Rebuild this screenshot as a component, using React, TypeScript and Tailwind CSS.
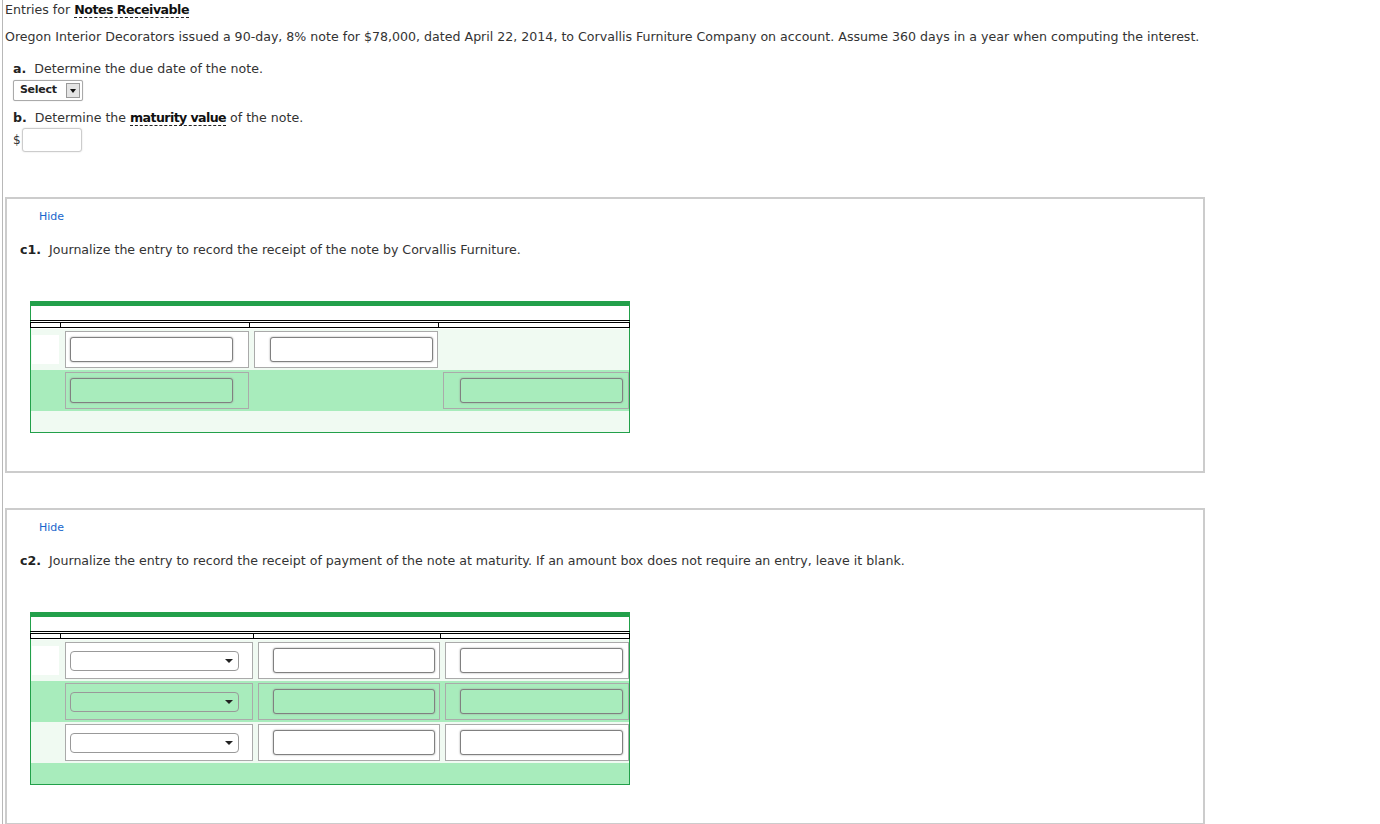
import React from "react";

const font = { fontFamily: '"DejaVu Sans", Verdana, sans-serif' };

function TextBox({ green }: { green?: boolean }) {
  return (
    <div
      className={`h-[25px] w-full rounded-[3px] border border-[#808080] shadow-[0_0_2px_#9a9a9a] ${
        green ? "bg-[#a8ecbc]" : "bg-white"
      }`}
    />
  );
}

function SelectBox({ green }: { green?: boolean }) {
  return (
    <div
      className={`flex h-[20px] w-full items-center justify-end rounded-[4px] border border-[#999] pr-[5px] ${
        green ? "bg-[#a8ecbc]" : "bg-white"
      }`}
    >
      <span className="h-0 w-0 border-x-[4px] border-t-[4px] border-x-transparent border-t-[#222]" />
    </div>
  );
}

type CellDef = { kind: "text" | "select"; pl: number; pr: number } | null;
type RowDef = { green: boolean; cells: CellDef[] };

function Cell({ width, green, def }: { width: number; green: boolean; def: NonNullable<CellDef> }) {
  return (
    <div className="flex h-full shrink-0 items-center justify-center" style={{ width }}>
      <div
        className={`flex h-[37px] items-center border border-[#aaa] ${green ? "bg-[#a8ecbc]" : "bg-white"}`}
        style={{ width: width - 5, paddingLeft: def.pl, paddingRight: def.pr }}
      >
        {def.kind === "select" ? <SelectBox green={green} /> : <TextBox green={green} />}
      </div>
    </div>
  );
}

function Journal({ cols, rows, tailGreen }: { cols: number[]; rows: RowDef[]; tailGreen: boolean }) {
  return (
    <div className="w-[600px] border-x border-b border-[#22a04a]">
      <div className="-mx-px h-[5px] bg-[#22a04a]" />
      <div className="h-[14px] bg-white" />
      <div className="-mx-px border-t border-black pt-px">
        <div className="flex h-[6px]">
          {cols.map((w, i) => (
            <div
              key={i}
              className={`h-full border-y border-r border-black ${i === 0 ? "border-l" : ""}`}
              style={{ width: i === 0 ? w + 1 : w }}
            />
          ))}
        </div>
      </div>
      <div className="h-px" />
      {rows.map((r, ri) => (
        <div key={ri} className={`flex h-[41px] items-center ${r.green ? "bg-[#a8ecbc]" : "bg-[#f0faf2]"}`}>
          <div className="flex h-full w-[31px] shrink-0 items-center pl-px">
            {ri === 0 && <div className="h-[29px] w-[27px] bg-white" />}
          </div>
          {r.cells.map((c, ci) => {
            const w = cols[ci + 1];
            if (c === null) return <div key={ci} style={{ width: w }} className="shrink-0" />;
            return <Cell key={ci} width={w} green={r.green} def={c} />;
          })}
        </div>
      ))}
      <div className={`h-[21px] ${tailGreen ? "bg-[#a8ecbc]" : "bg-[#f0faf2]"}`} />
    </div>
  );
}

function Panel({ label, text, children }: { label: string; text: string; children: React.ReactNode }) {
  return (
    <div className="w-[1200px] border-2 border-[#cccccc] bg-white pb-[38px]">
      <div className="pl-[32px] pt-[11px] text-[11px] leading-[14px] text-[#1a66cc]">Hide</div>
      <div className="mt-[18px] pl-[13px] text-[12.6px] leading-[16px] text-[#333]">
        <b className="text-[#222]">{label}</b>&nbsp; {text}
      </div>
      <div className="mt-[43px] pl-[23px]">{children}</div>
    </div>
  );
}

export default function App() {
  return (
    <div className="min-h-[824px] bg-white" style={font}>
      <div className="ml-[2px] min-h-[824px] border-l border-[#b8b8b8] pl-[2px] text-[12.6px] text-[#333]">
        <div className="pt-[2px] leading-[16px]">
          Entries for{" "}
          <b className="border-b border-dashed border-[#222] tracking-[-0.5px] text-[#111]">Notes Receivable</b>
        </div>
        <div className="mt-[11px] leading-[16px]">
          Oregon Interior Decorators issued a 90-day, 8% note for $78,000, dated April 22, 2014, to Corvallis Furniture
          Company on account. Assume 360 days in a year when computing the interest.
        </div>
        <div className="mt-[16px] pl-[8px] leading-[16px]">
          <b className="text-[#222]">a.</b>&nbsp; Determine the due date of the note.
        </div>
        <div className="mt-[3px] pl-[8px]">
          <div className="flex h-[21px] w-[70px] items-center rounded-[2px] border border-[#aaa] bg-white shadow-[0_0_1px_#bbb]">
            <span className="flex-1 pl-[6px] text-[11px] font-bold tracking-[-0.3px] text-[#222]">Select</span>
            <span className="mr-[2px] flex h-[15px] w-[14px] items-center justify-center border border-[#999] bg-[#e4e4e4]">
              <span className="h-0 w-0 border-x-[3px] border-t-[4px] border-x-transparent border-t-[#111]" />
            </span>
          </div>
        </div>
        <div className="mt-[9px] pl-[8px] leading-[16px]">
          <b className="text-[#222]">b.</b>&nbsp; Determine the{" "}
          <b className="border-b border-dashed border-[#222] tracking-[-0.6px] text-[#111]">maturity value</b> of the
          note.
        </div>
        <div className="mt-[2px] flex items-center pl-[8px]">
          <span className="text-[12px]">$</span>
          <div className="ml-px h-[24px] w-[60px] rounded-[3px] border border-[#ccc] bg-white shadow-[0_0_2px_#ddd]" />
        </div>
        <div className="mt-[45px] flex flex-col gap-[35px]">
          <Panel label="c1." text="Journalize the entry to record the receipt of the note by Corvallis Furniture.">
            <Journal
              cols={[30, 189, 189, 191]}
              rows={[
                {
                  green: false,
                  cells: [
                    { kind: "text", pl: 4, pr: 15 },
                    { kind: "text", pl: 15, pr: 4 },
                    null,
                  ],
                },
                {
                  green: true,
                  cells: [{ kind: "text", pl: 4, pr: 15 }, null, { kind: "text", pl: 16, pr: 5 }],
                },
              ]}
              tailGreen={false}
            />
          </Panel>
          <Panel
            label="c2."
            text="Journalize the entry to record the receipt of payment of the note at maturity. If an amount box does not require an entry, leave it blank."
          >
            <Journal
              cols={[30, 193, 187, 189]}
              rows={[false, true, false].map((g) => ({
                green: g,
                cells: [
                  { kind: "select", pl: 4, pr: 13 },
                  { kind: "text", pl: 14, pr: 4 },
                  { kind: "text", pl: 14, pr: 5 },
                ],
              }))}
              tailGreen
            />
          </Panel>
        </div>
      </div>
    </div>
  );
}
